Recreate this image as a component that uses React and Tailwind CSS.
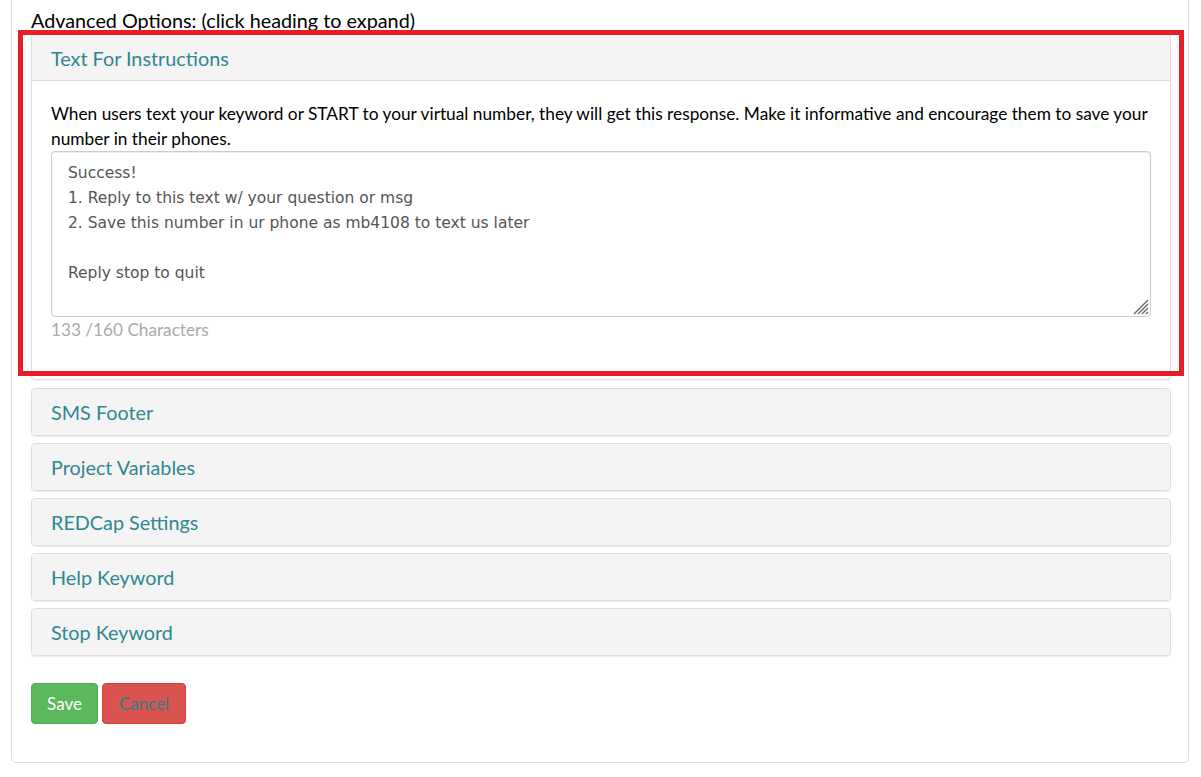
import React from 'react';

const collapsed = ['SMS Footer', 'Project Variables', 'REDCap Settings', 'Help Keyword', 'Stop Keyword'];

const message = `Success!
1. Reply to this text w/ your question or msg
2. Save this number in ur phone as mb4108 to text us later

Reply stop to quit`;

const PanelHeading = ({ title, last }) => (
  <div className={`h-[46px] px-[19px] pt-[2px] flex items-center bg-[#f4f4f4] ${last ? 'border-b border-[#dddddd] rounded-t-[3px]' : 'rounded-[3px]'}`}>
    <span className="text-[19.8px] text-[#2f8790]">{title}</span>
  </div>
);

export default function App() {
  return (
    <div className="min-h-screen bg-white font-['Lato','Open_Sans',sans-serif] relative">
      <div className="ml-[11px] w-[1178px] border-x border-b border-[#d6e9c6] rounded-b-[5px] pl-[19px] pr-[17px] pt-[7px] pb-[38px]">
        <div className="text-[19.8px] leading-[26px] text-black">Advanced Options: (click heading to expand)</div>

        {/* expanded panel */}
        <div className="mt-[1px] border border-[#dddddd] rounded-[4px] bg-white shadow-[0_1px_1px_rgba(0,0,0,0.05)]">
          <PanelHeading title="Text For Instructions" last />
          <div className="px-[19px] pt-[20px] pb-[37px]">
            <p className="text-[17.3px] leading-[25px] text-black">
              When users text your keyword or START to your virtual number, they will get this response. Make it informative and encourage them to save your number in their phones.
            </p>
            <div className="relative">
              <textarea
                readOnly
                defaultValue={message}
                className="block w-full h-[166px] border border-[#cccccc] rounded-[4px] px-[16px] pt-[9px] text-[15.5px] leading-[25px] text-[#555555] font-['DejaVu_Sans',sans-serif] shadow-[inset_0_1px_1px_rgba(0,0,0,0.075)] outline-none resize-none"
              />
              <svg className="absolute right-[2px] bottom-[2px] w-[17px] h-[17px]" viewBox="0 0 17 17">
                <g stroke="#6b6b6b" strokeWidth="1.4">
                  <line x1="2" y1="16" x2="16" y2="2" />
                  <line x1="6" y1="16" x2="16" y2="6" />
                  <line x1="10" y1="16" x2="16" y2="10" />
                  <line x1="14" y1="16" x2="16" y2="14" />
                </g>
              </svg>
            </div>
            <div className="text-[17.2px] leading-[25px] text-[#aaaaaa]">133 /160 Characters</div>
          </div>
        </div>

        <div className="flex flex-col gap-[7px] mt-[8px]">
          {collapsed.map((t) => (
            <div key={t} className="border border-[#dddddd] rounded-[4px] shadow-[0_1px_1px_rgba(0,0,0,0.08)]">
              <PanelHeading title={t} />
            </div>
          ))}
        </div>

        <div className="flex gap-[4px] mt-[27px]">
          <button className="h-[41px] w-[67px] rounded-[4px] bg-[#5cb85c] border border-[#4cae4c] text-white text-[17px]">Save</button>
          <button className="h-[41px] w-[84px] rounded-[4px] bg-[#d9534f] border border-[#d43f3a] text-[#2e7d83] text-[17px]">Cancel</button>
        </div>
      </div>

      {/* annotation box */}
      <div className="absolute left-[18px] top-[30px] w-[1166px] h-[346px] border-[5px] border-[#e61e25] pointer-events-none" />
    </div>
  );
}
